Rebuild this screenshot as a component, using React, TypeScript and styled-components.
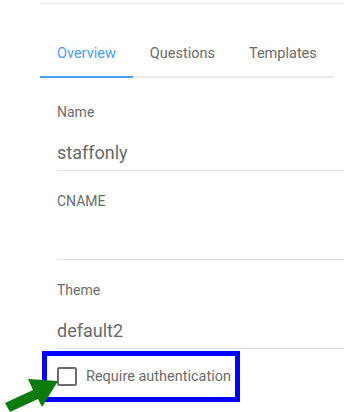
import React, { useState } from 'react';
import styled, { createGlobalStyle } from 'styled-components';

const GlobalStyle = createGlobalStyle`
  html, body {
    margin: 0;
    padding: 0;
    background: #fff;
  }
  body {
    font-family: Roboto, 'Liberation Sans', sans-serif;
    -webkit-font-smoothing: antialiased;
  }
`;

const tabs = ['Overview', 'Questions', 'Templates'];

const fields = [
  { label: 'Name', value: 'staffonly' },
  { label: 'CNAME', value: '' },
  { label: 'Theme', value: 'default2' },
];

const App = () => {
  const [active, setActive] = useState(0);
  const [values, setValues] = useState(fields.map((f) => f.value));
  const [requireAuth, setRequireAuth] = useState(false);

  const handleChange = (i) => (event) => {
    const next = [...values];
    next[i] = event.target.value;
    setValues(next);
  };

  return (
    <Page>
      <GlobalStyle />
      <TopRule />
      <TabBar>
        {tabs.map((t, i) => (
          <Tab key={t} active={i === active} onClick={() => setActive(i)}>
            {t}
          </Tab>
        ))}
      </TabBar>
      <Form>
        {fields.map((f, i) => (
          <Field key={f.label}>
            <Label>{f.label}</Label>
            <Input type="text" value={values[i]} onChange={handleChange(i)} />
          </Field>
        ))}
      </Form>
      <CheckRow>
        <HiddenInput
          type="checkbox"
          checked={requireAuth}
          onChange={() => setRequireAuth(!requireAuth)}
        />
        <Box checked={requireAuth} />
        <CheckText>Require authentication</CheckText>
      </CheckRow>
      <Arrow viewBox="0 374 64 38" width="64" height="38">
        <polygon
          points="58,381 28,379 33,390 5,403 10,412 38,399 42,407"
          fill="#0b7b0c"
        />
      </Arrow>
    </Page>
  );
};

const Page = styled.div`
  position: relative;
  padding-left: 40px;
  height: 412px;
  overflow: hidden;
`;

const TopRule = styled.div`
  height: 3px;
  border-bottom: 1px solid #ebebeb;
`;

const TabBar = styled.div`
  display: inline-flex;
  margin-top: 26px;
`;

const Tab = styled.div<{ active?: boolean }>`
  box-sizing: border-box;
  height: 48px;
  padding: 0 17px;
  display: flex;
  align-items: center;
  font-size: 14.5px;
  color: ${(p) => (p.active ? '#4a9ff2' : '#6b6b6b')};
  border-bottom: 2px solid ${(p) => (p.active ? '#4a9ff2' : '#ebebeb')};
  cursor: pointer;
`;

const Form = styled.div`
  padding: 24px 0 0 17px;
  display: flex;
  flex-direction: column;
  gap: 20px;
`;

const Field = styled.div`
  display: flex;
  flex-direction: column;
`;

const Label = styled.label`
  font-size: 14px;
  line-height: 20px;
  color: #6e6a6a;
`;

const Input = styled.input`
  box-sizing: border-box;
  height: 49px;
  padding: 18px 0 6px;
  border: none;
  border-bottom: 1px solid #e2e2e2;
  font-family: Roboto, 'Liberation Sans', sans-serif;
  font-size: 18px;
  line-height: 24px;
  color: #686868;
  background: transparent;
  outline: none;
`;

const CheckRow = styled.label`
  box-sizing: border-box;
  margin: 2px 0 0 2px;
  height: 51px;
  display: inline-flex;
  align-items: center;
  gap: 9px;
  padding: 0 4px 0 10px;
  border: 5px solid #0000ff;
  cursor: pointer;
`;

const HiddenInput = styled.input`
  display: none;
`;

const Box = styled.span<{ checked?: boolean }>`
  box-sizing: border-box;
  width: 20px;
  height: 19px;
  border: 2px solid #6d6d6d;
  border-radius: 2px;
  background: ${(p) => (p.checked ? '#6d6d6d' : 'transparent')};
`;

const CheckText = styled.span`
  font-size: 14.5px;
  color: #6b6b6b;
`;

const Arrow = styled.svg`
  position: absolute;
  left: 0;
  top: 374px;
  pointer-events: none;
`;

export default App;
